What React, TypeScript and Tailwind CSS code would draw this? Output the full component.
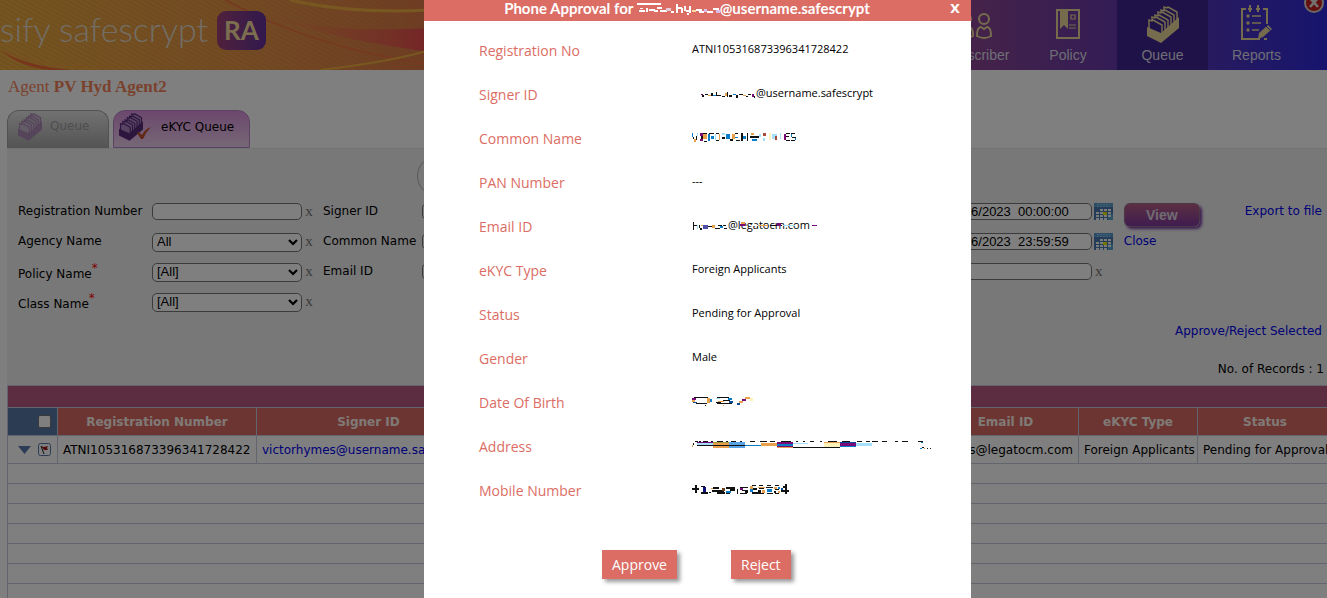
import React from 'react';

type Mark = [number, number, number, number, string];

function Marks({ w, h, marks, className = '' }: { w: number; h: number; marks: Mark[]; className?: string }) {
  return (
    <svg width={w} height={h} viewBox={`0 0 ${w} ${h}`} shapeRendering="crispEdges" aria-hidden="true" className={`shrink-0 ${className}`}>
      {marks.map(([x, y, mw, mh, c], i) => (
        <rect key={i} x={x} y={y} width={mw} height={mh} fill={c} />
      ))}
    </svg>
  );
}

const K = '#111111';
const B = '#0a7cc8';
const L = '#a5e0fb';
const O = '#e8a04c';
const P = '#7a0a78';
const Y = '#fdf3b8';

const titleMarks: Mark[] = [
  [0, 1, 24, 2, '#fff'], [3, 6, 3, 1, '#fff'], [2, 8, 6, 2, '#fff'], [9, 6, 2, 4, '#fff'], [12, 7, 6, 2, '#fff'], [17, 8, 4, 2, '#fff'],
  [20, 5, 5, 2, '#fff'], [23, 8, 7, 2, '#fff'], [29, 6, 5, 3, '#e9c9d8'], [34, 9, 3, 2, '#fff'], [39, 2, 2, 9, '#fff'], [41, 5, 4, 2, '#fff'],
  [44, 6, 2, 5, '#fff'], [47, 4, 2, 5, '#fff'], [49, 8, 3, 2, '#fff'], [52, 4, 2, 7, '#fff'], [50, 11, 2, 2, '#fff'], [55, 8, 4, 2, '#fbdca4'],
  [59, 7, 6, 2, '#fff'], [62, 9, 5, 2, '#fff'], [67, 7, 3, 3, '#d9bfe8'], [70, 9, 6, 2, '#fff'], [76, 6, 6, 2, '#fff'], [79, 8, 4, 3, '#d9bfe8'],
];
const signerMarks: Mark[] = [
  [1, 7, 2, 1, P], [2, 8, 2, 2, K], [5, 7, 3, 1, K], [8, 8, 3, 1, O], [11, 6, 2, 3, K], [13, 8, 3, 1, B], [16, 5, 1, 4, K], [17, 8, 4, 1, K],
  [22, 9, 3, 1, K], [25, 6, 2, 3, O], [27, 5, 1, 5, K], [29, 8, 3, 2, K], [33, 7, 3, 1, B], [36, 8, 2, 3, K], [39, 7, 4, 1, K], [43, 8, 3, 1, O],
  [46, 9, 2, 1, K], [48, 7, 3, 1, K], [52, 7, 2, 3, P], [54, 9, 1, 2, K],
];
const nameMarks: Mark[] = [
  [0, 0, 1, 4, B], [1, 4, 1, 2, K], [2, 6, 2, 3, O], [4, 3, 1, 4, K], [5, 0, 1, 3, L], [8, 0, 3, 3, P], [9, 3, 2, 3, K], [8, 6, 3, 2, P],
  [11, 0, 4, 1, K], [11, 1, 4, 5, O], [12, 8, 3, 1, K], [16, 1, 2, 7, B], [17, 0, 5, 1, K], [19, 3, 3, 3, B], [23, 1, 1, 6, L], [24, 0, 3, 1, K],
  [24, 7, 3, 1, K], [27, 1, 1, 6, O], [30, 0, 3, 2, L], [30, 4, 3, 2, K], [34, 1, 4, 5, B], [38, 6, 3, 2, K], [40, 1, 3, 5, O], [43, 0, 3, 1, K], [43, 4, 3, 1, B],
  [44, 7, 4, 1, K], [49, 0, 2, 8, K], [51, 3, 3, 3, B], [55, 0, 1, 8, K], [58, 3, 9, 2, K], [59, 0, 3, 2, O], [60, 6, 5, 2, B], [67, 1, 2, 3, L],
  [71, 0, 3, 3, '#a54d3a'], [71, 5, 2, 3, L], [77, 0, 2, 7, Y], [80, 1, 5, 5, L], [83, 3, 2, 4, '#a54d3a'], [88, 0, 1, 6, L], [92, 1, 2, 6, P],
  [94, 0, 4, 1, K], [94, 3, 3, 1, K], [94, 7, 4, 1, K], [99, 0, 4, 1, K], [99, 1, 1, 3, B], [100, 4, 4, 1, K], [103, 5, 1, 2, B], [99, 7, 4, 1, K],
];
const mailMarks: Mark[] = [
  [1, 3, 1, 8, K], [2, 6, 3, 1, K], [5, 6, 1, 4, L], [7, 6, 1, 3, K], [8, 9, 2, 2, K], [9, 6, 3, 1, O], [11, 6, 5, 4, '#5050a8'], [16, 7, 4, 1, K],
  [20, 6, 3, 3, O], [23, 9, 5, 1, K], [26, 6, 4, 1, K], [28, 7, 3, 2, B], [31, 6, 3, 1, K], [32, 9, 3, 1, K],
];
const mailOver: Mark[] = [
  [12, 6, 5, 2, P], [13, 4, 4, 2, O], [22, 7, 8, 1, '#fff'], [30, 7, 10, 1, O], [42, 7, 12, 1, K], [49, 5, 4, 3, P], [55, 7, 12, 1, L], [84, 7, 5, 1, P],
];
const birthMarks: Mark[] = [
  [2, 0, 14, 1, K], [0, 1, 4, 2, P], [0, 3, 3, 2, O], [1, 5, 4, 1, '#0a4c98'], [4, 6, 11, 1, K], [15, 1, 3, 5, O], [18, 2, 2, 3, B], [25, 0, 12, 1, K],
  [24, 1, 4, 1, L], [36, 1, 4, 2, B], [31, 3, 7, 1, K], [26, 4, 6, 1, O], [24, 5, 5, 1, K], [25, 6, 15, 1, K], [37, 4, 4, 2, '#0a4c98'],
  [53, 0, 5, 2, O], [50, 2, 4, 2, P], [47, 4, 4, 2, O], [45, 6, 3, 2, '#0a4c98'], [58, 1, 3, 3, Y], [13, 8, 1, 1, K], [31, 8, 1, 1, O],
];
const addressMarks: Mark[] = [
  [0, 4, 1, 2, O], [1, 2, 1, 2, K], [3, 0, 3, 1, K], [7, 0, 2, 1, K], [11, 0, 5, 1, K], [19, 0, 2, 1, K], [25, 0, 6, 1, K], [34, 0, 2, 1, K], [39, 0, 5, 1, K],
  [48, 0, 2, 1, K], [58, 0, 5, 1, K], [68, 0, 7, 1, K], [78, 0, 5, 1, K], [89, 0, 10, 1, K], [104, 0, 2, 1, K], [111, 0, 2, 1, K], [118, 0, 4, 1, K],
  [128, 0, 2, 1, K], [136, 0, 9, 1, K], [150, 0, 8, 1, K], [165, 0, 5, 1, K], [174, 0, 4, 1, K], [180, 0, 6, 1, K], [190, 0, 5, 1, K],
  [203, 0, 3, 1, K], [210, 0, 6, 1, K], [226, 0, 5, 1, K], [229, 1, 2, 1, B],
  [5, 1, 16, 1, P], [5, 2, 16, 2, L], [21, 1, 16, 1, '#9a9a40'], [21, 2, 16, 5, O], [37, 1, 16, 6, '#58a4e6'], [5, 4, 48, 1, K], [53, 4, 16, 1, B],
  [69, 2, 16, 3, O], [85, 1, 16, 2, P], [85, 3, 16, 2, B], [85, 5, 16, 1, P], [85, 6, 16, 1, O], [101, 2, 15, 1, L], [132, 1, 16, 1, O],
  [132, 2, 16, 4, Y], [148, 1, 16, 1, '#0a4c98'], [148, 2, 16, 3, P], [148, 5, 16, 1, B], [164, 2, 16, 3, L], [101, 6, 47, 1, K],
  [230, 6, 2, 1, K], [228, 7, 2, 1, B], [232, 7, 1, 1, O], [235, 7, 1, 1, K], [238, 7, 1, 1, K],
];
const mobileMarks: Mark[] = [
  [0, 4, 7, 2, K], [3, 1, 2, 8, K], [9, 2, 4, 1, K], [11, 3, 3, 6, '#10107c'], [9, 8, 7, 2, K], [17, 8, 2, 1, K], [19, 4, 8, 1, O], [21, 3, 6, 2, K],
  [20, 6, 12, 2, K], [25, 8, 8, 2, K], [30, 4, 3, 3, '#6a4020'], [34, 3, 9, 2, K], [34, 7, 5, 2, B], [38, 4, 5, 3, K], [34, 9, 4, 1, K], [45, 5, 1, 5, K],
  [48, 3, 8, 1, K], [48, 4, 3, 2, P], [50, 6, 6, 1, K], [53, 7, 3, 2, K], [48, 9, 7, 1, K], [58, 2, 3, 3, O], [58, 5, 3, 3, B], [60, 1, 4, 1, K],
  [61, 4, 4, 2, K], [60, 8, 6, 2, K], [67, 1, 4, 1, K], [66, 3, 7, 1, O], [67, 4, 5, 1, K], [66, 6, 3, 3, K], [70, 6, 3, 3, O], [66, 9, 6, 1, K],
  [75, 1, 4, 1, K], [74, 3, 7, 1, K], [75, 5, 5, 3, B], [75, 9, 6, 1, K], [83, 1, 4, 1, K], [82, 3, 3, 2, O], [86, 3, 2, 2, B], [83, 5, 4, 1, K],
  [82, 7, 2, 2, K], [86, 7, 2, 2, O], [83, 9, 4, 1, K], [93, 0, 2, 10, K], [91, 2, 2, 2, K], [89, 4, 2, 2, '#0a4c98'], [89, 6, 8, 2, K],
];

function FileBox({ color, card, size, className = '' }: { color: string; card: string; size: number; className?: string }) {
  return (
    <svg width={size} height={(size * 37) / 32} viewBox="0 0 32 37" aria-hidden="true" className={className}>
      <g fill={card} stroke={color} strokeWidth="1.500">
        <path d="M17 4V1l3 1 1-1 9 5v11l-13-5z" />
        <path d="M14 7V4l3 1 1-1 9 5v11l-13-5z" />
        <path d="M11 9V6l3 1 1-1 9 5v12l-13-5z" />
        <path d="M8 12V9l3 1 1-1 9 5v12L8 22z" />
        <path d="M5 14v-3l3 1 1-1 9 5v12L5 24z" />
        <path d="M2 17v-3l3 1 1-1 9 5v12L2 26z" />
      </g>
      <path d="M0 21l14 6L32 11v11L14 37 0 30z" fill={color} />
    </svg>
  );
}

function Calendar() {
  return (
    <svg width="19" height="17" viewBox="0 0 19 17" shapeRendering="crispEdges" aria-hidden="true" className="block">
      <rect width="19" height="17" fill="#4a78b0" />
      <rect width="19" height="4" fill="#5a98cc" />
      <path d="M3 1.500h13M3 3.500h13" stroke="#8cc4ec" strokeDasharray="2 1" />
      <rect x="14" y="11" width="5" height="6" fill="#58a4d0" />
      <path d="M6 7h11M2 10h15M2 13h15M2 16h11" stroke="#f4f6fa" strokeWidth="2" strokeDasharray="3 1" />
      <rect x="9" y="9" width="4" height="3" fill="#e8e800" />
    </svg>
  );
}

const field = 'w-[150px] rounded-[5px] border border-[#767676] bg-white font-["Liberation_Sans",sans-serif] text-[13px] text-black';

function Clear() {
  return <button type="button" className="h-4 w-[21px] pr-[7px] font-['Liberation_Serif',serif] text-[15px] leading-4 text-[#777]">x</button>;
}

function SelectRow({ id, label, value, required }: { id: string; label: string; value: string; required?: boolean }) {
  return (
    <div className="flex h-[30px] items-start">
      <label htmlFor={id} className={required ? 'w-[134px] leading-[22px]' : 'w-[134px] leading-4'}>
        {label}
        {required && <sup className="text-[12px] text-[#f00]">*</sup>}
      </label>
      <span className="relative">
        <select id={id} className={`${field} block h-[19px] appearance-none px-1 pb-[2px] leading-[15px]`}>
          <option>{value}</option>
        </select>
        <svg width="10" height="7" viewBox="0 0 10 7" className="pointer-events-none absolute right-[4px] top-[6px]" aria-hidden="true">
          <path d="M1 1l4 4 4-4" fill="none" stroke="#000" strokeWidth="2.200" />
        </svg>
      </span>
      <Clear />
    </div>
  );
}

function InputRow({ id, label, labelWidth }: { id: string; label: string; labelWidth: string }) {
  return (
    <div className="flex h-[30px] items-start">
      <label htmlFor={id} className={`${labelWidth} leading-4`}>{label}</label>
      <input id={id} type="text" className={`${field} h-[17px] px-[3px]`} />
      <Clear />
    </div>
  );
}

function Header() {
  const item = 'flex h-[70px] flex-col items-center justify-end pb-[5px] text-[14px] leading-5 text-[#dcdce8]';
  const gold = '#ead89c';
  return (
    <header className="relative flex h-[70px] items-stretch justify-between overflow-hidden bg-linear-to-r from-[#ecac40] via-[#e89448] via-20% to-[#dc6848] to-40% font-['Liberation_Sans',sans-serif]">
      <svg className="absolute left-0 top-0" width="430" height="70" viewBox="0 0 430 70" aria-hidden="true">
        <defs>
          <pattern id="weave" width="4" height="4" patternUnits="userSpaceOnUse" patternTransform="rotate(28)">
            <path d="M0 1h4" stroke="#b87830" strokeWidth="1" opacity=".35" />
          </pattern>
          <linearGradient id="flame" x1="0" x2="1">
            <stop offset="0" stopColor="#f09848" stopOpacity="0" />
            <stop offset="1" stopColor="#e84850" />
          </linearGradient>
        </defs>
        <rect width="430" height="70" fill="url(#weave)" />
        <path d="M225 0C300 30 360 32 430 28V52C340 40 270 22 225 0z" fill="url(#flame)" />
        <path d="M0 50Q25 66 72 70H50Q20 67 0 50z" fill="#ee6c38" />
        <path d="M225 0Q320 50 430 64" fill="none" stroke="#ee7040" strokeWidth="1.500" />
        <path d="M290 0Q350 14 430 10" fill="none" stroke="#f0b040" strokeWidth="3" />
        <path d="M320 70Q390 62 430 50" fill="none" stroke="#f0b040" strokeWidth="2" />
        <path d="M0 50Q30 64 100 70" fill="none" stroke="#f0a040" strokeWidth="1.500" />
      </svg>
      <div className="relative flex w-[266px] items-start justify-between pt-[11px]">
        <span className="whitespace-nowrap font-['Lato',sans-serif] text-[34px] font-light leading-9 text-[#e4dccc]">sify safescrypt</span>
        <span className="flex h-[39px] w-[49px] items-center justify-center rounded-[9px] bg-linear-to-r from-[#a04078] to-[#64309c] font-['Lato',sans-serif] text-[26px] font-bold text-[#f6dea0]">RA</span>
      </div>
      <nav className="relative flex bg-linear-to-r from-[#94468c] via-[#6436ac] to-[#2c28dc]">
        <a href="#subscriber" className={`${item} w-[86px]`}>
          <svg width="38" height="28" viewBox="0 0 38 28" fill="none" stroke={gold} strokeWidth="2" className="mb-[5px] mr-1" aria-hidden="true">
            <circle cx="11" cy="7" r="5" /><circle cx="29" cy="7" r="5" />
            <path d="M4 24q0-9 4-9l3 2 3-2q4 0 4 9-7 4-14 0zM22 24q0-9 4-9l3 2 3-2q4 0 4 9-7 4-14 0z" />
          </svg>
          Subscriber
        </a>
        <a href="#policy" className={`${item} w-[98px]`}>
          <svg width="24" height="30" viewBox="0 0 24 30" className="mb-[6px]" aria-hidden="true">
            <path d="M1 1h22v28H1z" fill="none" stroke={gold} strokeWidth="2" />
            <path d="M4 0h8v20l-4-4-4 4z" fill={gold} />
            <path d="M15 6h4v4h-4zM13 16h7M13 19h7" fill="none" stroke={gold} strokeWidth="1.200" />
          </svg>
          Policy
        </a>
        <a href="#queue" className={`${item} w-[91px] bg-[#3c2490]`}>
          <FileBox color={gold} card="#3c2490" size={32} className="mb-[2px]" />
          Queue
        </a>
        <a href="#reports" className={`${item} w-[97px]`}>
          <svg width="32" height="36" viewBox="0 0 32 36" fill="none" stroke={gold} strokeWidth="2" className="mb-1" aria-hidden="true">
            <path d="M5 4H1v30h18M7 4h4M15 4h4M22 4h4v15M9 0v7M17 0v7M23 34h3" />
            <path d="M11 11h9M11 18h9M11 25h7" strokeWidth="1.400" />
            <path d="M17 34l1-6 9-8 4 4-9 8z" fill={gold} stroke="none" />
            <path d="M25 21l4 4" stroke="#4030d0" strokeWidth="1" />
            <g fill={gold} stroke="none"><circle cx="7" cy="11" r="1.700" /><circle cx="7" cy="18" r="1.700" /><circle cx="7" cy="25" r="1.700" /></g>
          </svg>
          Reports
        </a>
        <span className="w-[22px]" />
      </nav>
      <svg className="absolute right-[3px] top-0" width="20" height="13" viewBox="0 0 20 13" aria-hidden="true">
        <circle cx="10" cy="3" r="9" fill="#c82020" stroke="#d8d0c8" strokeWidth="2" />
        <path d="M6-2l8 9M14-2L6 7" stroke="#e8e4e0" strokeWidth="2.600" />
      </svg>
    </header>
  );
}

function RecordsTable() {
  const th = 'border border-[#c4c8dc] bg-[#da6a64] p-0 text-center font-bold text-[#fff4ec]';
  const td = 'whitespace-nowrap border border-[#c4c8dc] px-[5px]';
  return (
    <table className="w-[1325px] table-fixed border-collapse bg-white">
      <colgroup>
        <col className="w-[50px]" /><col className="w-[199px]" /><col className="w-[224px]" /><col className="w-[452px]" />
        <col className="w-[146px]" /><col className="w-[119px]" /><col className="w-[135px]" />
      </colgroup>
      <thead>
        <tr className="h-[22px]"><td colSpan={7} className="border border-[#c4c8dc] bg-[#b85880]" /></tr>
        <tr className="h-[28px]">
          <th className="border border-[#c4c8dc] bg-[#5878a4] p-0">
            <input type="checkbox" aria-label="Select all" className="ml-[30px] block size-[13px] appearance-none rounded-[2px] border border-[#767676] bg-white" />
          </th>
          <th className={th}>Registration Number</th>
          <th className={th}>Signer ID</th>
          <th className={th} />
          <th className={th}>Email ID</th>
          <th className={th}>eKYC Type</th>
          <th className={th}>Status</th>
        </tr>
      </thead>
      <tbody>
        <tr className="h-[28px]">
          <td className="border border-[#c4c8dc] p-0">
            <div className="flex items-center gap-[7px] pl-[10px]">
              <svg width="13" height="8" viewBox="0 0 13 8" aria-hidden="true"><path d="M0 0h13L6.500 8z" fill="#5878ac" /></svg>
              <svg width="13" height="13" viewBox="0 0 13 13" aria-hidden="true">
                <rect x=".5" y=".5" width="12" height="12" rx="2" fill="#fff" stroke="#5878ac" />
                <path d="M3 3l3 1 4-1-1 2 1 2H6z" fill="#a01818" />
                <path d="M3 3l3 8" stroke="#222" />
              </svg>
            </div>
          </td>
          <td className={td}>ATNI105316873396341728422</td>
          <td className={`${td} text-[#0000ee]`}>victorhymes@username.safescrypt</td>
          <td className={td} />
          <td className={`${td} text-right`}>s@legatocm.com</td>
          <td className={td}>Foreign Applicants</td>
          <td className={td}>Pending for Approval</td>
        </tr>
        {[0, 1, 2, 3, 4, 5, 6].map((n) => (
          <tr key={n} className="h-[20px]"><td colSpan={7} className="border border-[#c4c8dc]" /></tr>
        ))}
      </tbody>
    </table>
  );
}

function Page() {
  return (
    <div className="font-['DejaVu_Sans',sans-serif] text-[12px] text-black">
      <Header />
      <h1 className="h-[40px] pl-2 pt-[7px] font-['Liberation_Serif',serif] text-[17px] leading-5 text-[#f5845a]">
        Agent <b>PV Hyd Agent2</b>
      </h1>
      <div className="flex h-[38px] gap-1 pl-[7px]">
        <button type="button" className="flex w-[102px] items-start gap-[8px] rounded-t-[12px] border border-b-0 border-[#a4a4a4] bg-linear-to-b from-[#e4e4e4] to-[#a8a8a8] pl-[10px] text-[#9c9c9c]">
          <FileBox color="#aa88b4" card="#c8b8cc" size={24} className="mt-[2px]" />
          <span className="pt-[7px] leading-4">Queue</span>
        </button>
        <button type="button" className="flex w-[137px] items-start rounded-t-[12px] border border-[#b884c4] bg-linear-to-b from-[#d890dc] to-[#ecd0ec] pl-[5px] text-black">
          <FileBox color="#582c7c" card="#b088c4" size={24} className="mt-[2px]" />
          <svg width="14" height="12" viewBox="0 0 14 12" className="-ml-[6px] mt-[16px] shrink-0" aria-hidden="true"><path d="M0 6l2-1 3 3Q8 2 14 0 9 5 6 12H4z" fill="#c4502c" /></svg>
          <span className="ml-[10px] whitespace-nowrap pt-[8px] leading-4">eKYC Queue</span>
        </button>
      </div>
      <main className="ml-[7px] border-t border-[#e4e4e4] bg-[#f0f0f0]">
        <div className="h-[54px] pl-[410px] pt-[7px]">
          <div className="size-[40px] rounded-full border border-[#b0b0b0]" />
        </div>
        <form className="flex h-[120px] items-start gap-0 pl-[11px]">
          <div>
            <InputRow id="reg" label="Registration Number" labelWidth="w-[134px]" />
            <SelectRow id="agency" label="Agency Name" value="All" />
            <SelectRow id="policy" label="Policy Name" value="[All]" required />
            <SelectRow id="class" label="Class Name" value="[All]" required />
          </div>
          <div>
            <InputRow id="signer" label="Signer ID" labelWidth="w-[99px]" />
            <InputRow id="common" label="Common Name" labelWidth="w-[99px]" />
            <InputRow id="email" label="Email ID" labelWidth="w-[99px]" />
          </div>
          <div className="ml-auto">
            <div className="flex h-[30px] items-start gap-[2px]">
              <input aria-label="From date" defaultValue="01/06/2023  00:00:00" className={`${field} h-[17px] px-[3px]`} />
              <button type="button" aria-label="Pick start date"><Calendar /></button>
            </div>
            <div className="flex h-[30px] items-start gap-[2px]">
              <input aria-label="To date" defaultValue="06/06/2023  23:59:59" className={`${field} h-[17px] px-[3px]`} />
              <button type="button" aria-label="Pick end date"><Calendar /></button>
            </div>
            <div className="flex h-[30px] items-start">
              <input aria-label="Additional filter" className={`${field} h-[17px] px-[3px]`} />
              <Clear />
            </div>
          </div>
          <div className="ml-[11px] flex w-[121px] flex-col items-start gap-[6px]">
            <button type="button" className="h-6 w-[76px] rounded-[6px] border border-[#94708c] bg-linear-to-b from-[#b85c84] to-[#8038a0] font-['Liberation_Sans',sans-serif] text-[14px] font-bold text-[#e0d8e4] shadow-[2px_2px_3px_#7838a0]">View</button>
            <a href="#close" className="leading-4 text-[#0000ee]">Close</a>
          </div>
          <a href="#export" className="mr-[5px] whitespace-nowrap leading-4 text-[#0000ee]">Export to file</a>
        </form>
        <div className="flex h-[62px] flex-col items-end justify-start gap-[22px] pr-[5px] leading-4">
          <a href="#selected" className="text-[#0000ee]">Approve/Reject Selected</a>
          <p className="-mr-[2px]">No. of Records : 1</p>
        </div>
        <RecordsTable />
      </main>
    </div>
  );
}

const rows: { label: string; value: React.ReactNode }[] = [
  { label: 'Registration No', value: 'ATNI105316873396341728422' },
  { label: 'Signer ID', value: <><Marks w={56} h={12} marks={signerMarks} className="ml-2" /><span>@username.safescrypt</span></> },
  { label: 'Common Name', value: <Marks w={105} h={9} marks={nameMarks} /> },
  { label: 'PAN Number', value: '---' },
  {
    label: 'Email ID',
    value: (
      <>
        <Marks w={36} h={12} marks={mailMarks} />
        <span className="relative">@legatocm.com<Marks w={90} h={12} marks={mailOver} className="absolute left-0 top-[1px]" /></span>
      </>
    ),
  },
  { label: 'eKYC Type', value: 'Foreign Applicants' },
  { label: 'Status', value: 'Pending for Approval' },
  { label: 'Gender', value: 'Male' },
  { label: 'Date Of Birth', value: <Marks w={64} h={9} marks={birthMarks} /> },
  { label: 'Address', value: <Marks w={241} h={9} marks={addressMarks} /> },
  { label: 'Mobile Number', value: <Marks w={98} h={11} marks={mobileMarks} /> },
];

function ApprovalDialog() {
  const action = 'h-[29px] bg-[#db6d64] px-[10px] text-[14px] font-medium text-white shadow-[3px_3px_4px_rgba(0,0,0,0.4)]';
  return (
    <section role="dialog" aria-labelledby="dialog-title" className="h-full w-[547px] bg-white font-['Open_Sans',sans-serif]">
      <div className="flex h-[21px] items-start bg-[#db6d64] pr-[11px] font-['Lato',sans-serif] text-[15px] font-bold leading-4 text-white">
        <h2 id="dialog-title" className="flex flex-1 justify-center whitespace-pre">
          <span>Phone Approval for </span>
          <Marks w={83} h={14} marks={titleMarks} className="mt-[2px]" />
          <span>@username.safescrypt</span>
        </h2>
        <button type="button" aria-label="Close dialog" className="font-['DejaVu_Sans',sans-serif] text-[13px] leading-[18px]">X</button>
      </div>
      <dl className="pt-2">
        {rows.map((r) => (
          <div key={r.label} className="flex h-[44px] items-center pl-[55px]">
            <dt className="w-[213px] text-[14px] leading-5 text-[#db6d64]">{r.label}</dt>
            <dd className="flex items-center pb-1 text-[11px] leading-4 text-black">{r.value}</dd>
          </div>
        ))}
      </dl>
      <div className="flex gap-[54px] pl-[178px] pt-[37px]">
        <button type="button" className={action}>Approve</button>
        <button type="button" className={action}>Reject</button>
      </div>
    </section>
  );
}

export default function App() {
  return (
    <div className="relative h-screen overflow-hidden bg-white">
      <Page />
      <div className="absolute inset-0 flex justify-center bg-black/50 pl-[68px]">
        <ApprovalDialog />
      </div>
    </div>
  );
}
